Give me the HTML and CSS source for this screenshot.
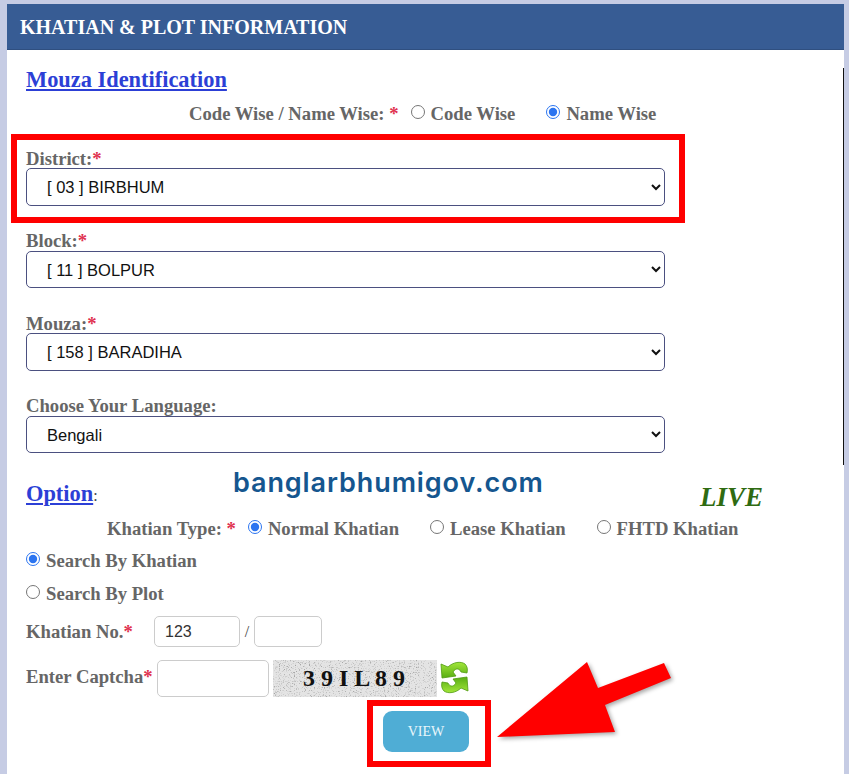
FILE: index.html
```html
<!DOCTYPE html>
<html lang="en">
<head>
<meta charset="utf-8">
<title>Khatian &amp; Plot Information</title>
<link rel="stylesheet" href="styles.css">
</head>
<body>
<main class="panel">
  <h1 class="panel-title">KHATIAN &amp; PLOT INFORMATION</h1>
  <div class="panel-body">
    <section class="mouza">
      <h2 class="heading"><a href="#">Mouza Identification</a></h2>
      <div class="radio-row code-row">
        <span class="lbl">Code Wise / Name Wise: <b class="req">*</b></span>
        <label class="opt first"><input type="radio" name="w"><span>Code Wise</span></label>
        <label class="opt gap-name"><input type="radio" name="w" checked><span>Name Wise</span></label>
      </div>
      <div class="field district">
        <label class="lbl">District:<b class="req">*</b></label>
        <select><option>[ 03 ] BIRBHUM</option></select>
      </div>
      <div class="field block">
        <label class="lbl">Block:<b class="req">*</b></label>
        <select class="short"><option>[ 11 ] BOLPUR</option></select>
      </div>
      <div class="field moz">
        <label class="lbl">Mouza:<b class="req">*</b></label>
        <select><option>[ 158 ] BARADIHA</option></select>
      </div>
      <div class="field lang">
        <label class="lbl">Choose Your Language:</label>
        <select class="short"><option>Bengali</option></select>
      </div>
    </section>

    <section class="options">
      <div class="option-head">
        <h2 class="heading sm"><a href="#">Option</a><span class="colon">:</span></h2>
        <div class="brand">banglarbhumigov.com</div>
        <div class="live">LIVE</div>
      </div>
      <div class="radio-row type-row">
        <span class="lbl">Khatian Type: <b class="req">*</b></span>
        <label class="opt first"><input type="radio" name="k" checked><span>Normal Khatian</span></label>
        <label class="opt gap-lease"><input type="radio" name="k"><span>Lease Khatian</span></label>
        <label class="opt gap-fhtd"><input type="radio" name="k"><span>FHTD Khatian</span></label>
      </div>
      <label class="opt line one"><input type="radio" name="s" checked><span>Search By Khatian</span></label>
      <label class="opt line two"><input type="radio" name="s"><span>Search By Plot</span></label>
      <div class="inline khatian">
        <span class="lbl k-lbl">Khatian No.<b class="req">*</b></span>
        <input class="box k1" type="text" value="123">
        <span class="slash">/</span>
        <input class="box k2" type="text">
      </div>
      <div class="inline captcha">
        <span class="lbl c-lbl">Enter Captcha<b class="req">*</b></span>
        <input class="box c1" type="text">
        <div class="cap-img">
          <svg class="noise" width="164" height="37" aria-hidden="true">
            <filter id="n" x="0" y="0" width="100%" height="100%">
              <feTurbulence type="fractalNoise" baseFrequency="0.8" numOctaves="2" seed="7"/>
              <feColorMatrix type="matrix" values="0 0 0 0 0.2  0 0 0 0 0.2  0 0 0 0 0.2  2.6 2.6 0 0 -2.75"/>
            </filter>
            <rect width="164" height="37" fill="#e4e4e4"/>
            <rect width="164" height="37" filter="url(#n)" opacity=".6"/>
          </svg>
          <span class="cap-text">3 9 I L 8 9</span>
        </div>
        <svg class="refresh" width="30" height="33" viewBox="0 0 30 33" aria-label="Refresh">
          <defs>
            <linearGradient id="g" x1="0" y1="0" x2="0" y2="1">
              <stop offset="0" stop-color="#a2e63a"/>
              <stop offset="1" stop-color="#58ad12"/>
            </linearGradient>
          </defs>
          <path d="M1 3L8 6C13 1 21 0 25 3C27 5 28 8 27 12L21 11C20 8 16 6 13 11L16 15L2 17Z" fill="url(#g)" stroke="#4f9a10" stroke-width=".8"/>
          <path d="M1 3L8 6C13 1 21 0 25 3C27 5 28 8 27 12L21 11C20 8 16 6 13 11L16 15L2 17Z" transform="rotate(180 14.500 16.500)" fill="url(#g)" stroke="#4f9a10" stroke-width=".8"/>
        </svg>
      </div>
      <div class="actions"><button class="view" type="button">VIEW</button></div>
    </section>
  </div>
</main>

<div class="mark mark-district"></div>
<div class="mark mark-view"></div>
<svg class="arrow" width="849" height="774" viewBox="0 0 849 774" aria-hidden="true">
  <polygon points="497,737 587,662 598,688 664,663 671,678 605,705 615,732" fill="#ff0000"/>
</svg>
</body>
</html>
```
FILE: styles.css
```css
* { box-sizing: border-box; }
html, body { margin: 0; height: 774px; overflow: hidden; }
body {
  position: relative;
  background: #c6cce4;
  padding: 4px 5px 0 7px;
  font-family: "Liberation Serif", serif;
}
.panel { background: #fff; height: 770px; }
.panel-title {
  margin: 0;
  height: 46px;
  padding-left: 13px;
  background: #375c94;
  border-bottom: 1px solid #2f4f80;
  color: #fff;
  font-size: 20px;
  line-height: 46px;
  font-weight: bold;
}
.panel-body { padding-top: 18px; }
.mouza { height: 397px; border-right: 1px solid #111; padding: 1px 0 0 19px; }
.options { padding-left: 19px; }

.heading { margin: 0; font-size: 22.400px; line-height: 22px; font-weight: bold; }
.heading a { color: #2c3fd6; }
.heading.sm { line-height: 24px; }
.colon { color: #444; font-size: 16px; font-weight: normal; }

.lbl { color: #666; font-size: 18.670px; font-weight: bold; line-height: 20px; }
.req { color: #e0314f; font-weight: bold; }

.radio-row { display: flex; align-items: center; height: 20px; }
.code-row { margin-top: 13px; padding-left: 163px; }
.type-row { margin-top: 10px; padding-left: 81px; }

.opt { display: inline-flex; align-items: center; color: #666; font-size: 18.670px; font-weight: bold; line-height: 20px; }
.opt input { width: 14px; height: 14px; margin: 0 6px 4px 0; accent-color: #2b74f0; }
.first { margin-left: 12px; }
.gap-name { margin-left: 31px; }
.gap-lease { margin-left: 31px; }
.gap-fhtd { margin-left: 31px; }

.field { display: flex; flex-direction: column; align-items: flex-start; }
.field .lbl { display: block; height: 18px; line-height: 18px; }
.district { margin-top: 26px; }
.block { margin-top: 26px; }
.moz { margin-top: 27px; }
.lang { margin-top: 26px; }

select {
  width: 639px;
  height: 38px;
  padding-left: 16px;
  background: #fff;
  border: 1px solid #4b5080;
  border-radius: 5px;
  color: #111;
  font-family: "Liberation Sans", sans-serif;
  font-size: 16.500px;
}
select.short { height: 37px; margin-top: 1px; }

.option-head { display: flex; align-items: flex-start; height: 44px; }
.option-head .heading { margin-top: 17px; width: 207px; }
.brand {
  margin-top: 0;
  width: 467px;
  color: #15568f;
  font-family: "Inter", sans-serif;
  font-size: 27px;
  font-weight: 600;
  letter-spacing: 0.900px;
  line-height: 36px;
}
.live {
  margin-top: 17px;
  color: #2f6b12;
  font-size: 27px;
  font-style: italic;
  font-weight: bold;
  line-height: 30px;
}

.line { display: flex; }
.one { margin-top: 12px; }
.two { margin-top: 13px; }

.inline { display: flex; align-items: center; }
.khatian { margin-top: 12px; height: 31px; }
.captcha { margin-top: 13px; height: 37px; }
.k-lbl { width: 128px; }
.c-lbl { width: 131px; margin-bottom: 4px; }

.box {
  background: #fff;
  border: 1px solid #ccc;
  border-radius: 5px;
  color: #333;
  font-family: "Liberation Sans", sans-serif;
  font-size: 16px;
  padding: 0 10px;
}
.k1 { width: 86px; height: 31px; }
.k2 { width: 68px; height: 31px; }
.c1 { width: 112px; height: 37px; }
.slash { width: 14px; text-align: center; color: #444; font-size: 16px; }

.cap-img { position: relative; width: 164px; height: 37px; margin-left: 4px; }
.noise { display: block; }
.cap-text {
  position: absolute;
  top: 7px;
  left: 30px;
  color: #111;
  font-size: 24px;
  font-weight: bold;
  line-height: 22px;
  white-space: nowrap;
}
.refresh { margin-left: 3px; margin-bottom: 3px; }

.actions { margin-top: 14px; padding-left: 357px; }
.view {
  width: 86px;
  height: 41px;
  border: 0;
  border-radius: 9px;
  background: #4fadd5;
  color: #e8f6fb;
  font-family: "Liberation Serif", serif;
  font-size: 14px;
}

.mark { position: absolute; border: 6px solid #f00; }
.mark-district { left: 11px; top: 134px; width: 674px; height: 89px; }
.mark-view { left: 367px; top: 700px; width: 124px; height: 67px; }
.arrow { position: absolute; left: 0; top: 0; filter: drop-shadow(2px 2px 2px rgba(0,0,0,.35)); pointer-events: none; }
```
